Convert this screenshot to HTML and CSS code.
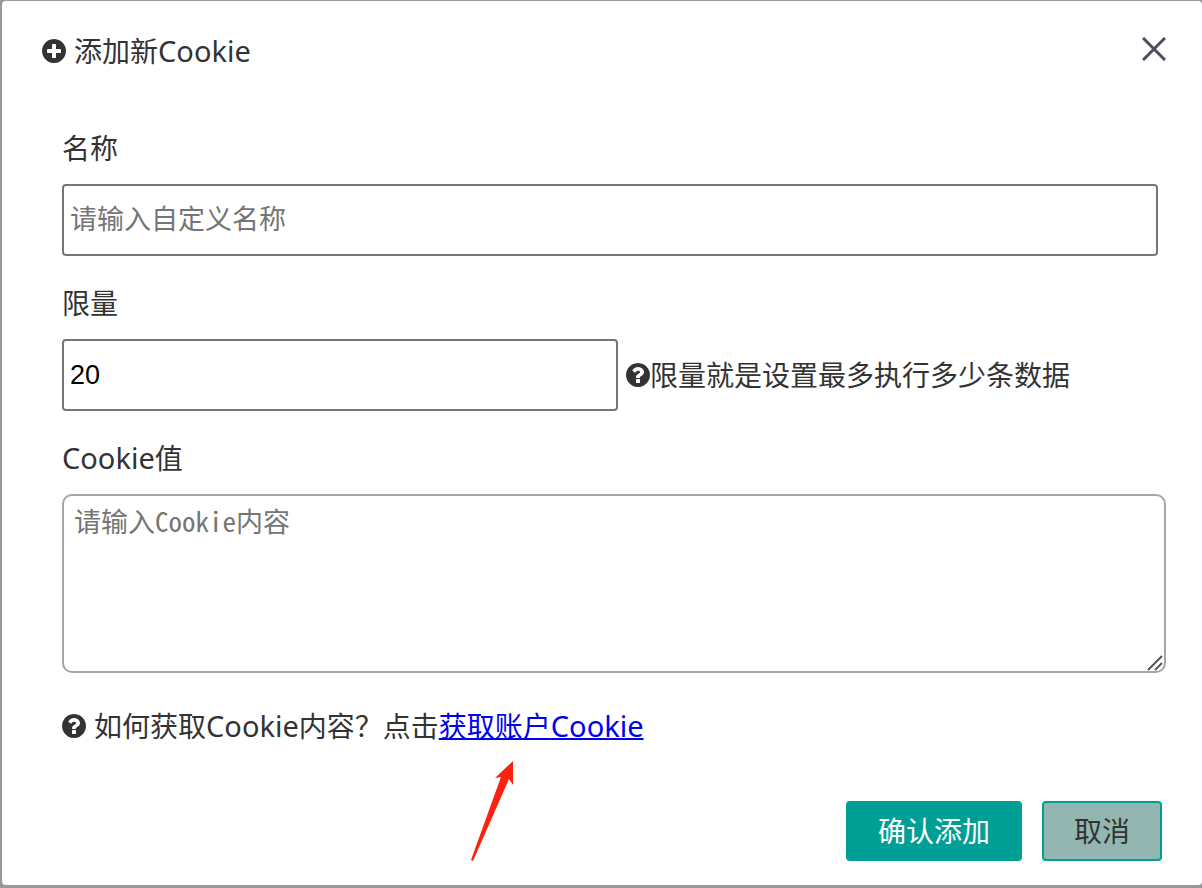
FILE: index.html
```html
<!DOCTYPE html>
<html lang="zh-CN">
<head>
<meta charset="utf-8">
<meta name="viewport" content="width=device-width, initial-scale=1">
<title>添加新Cookie</title>
<link rel="stylesheet" href="styles.css">
</head>
<body>
<main class="dialog" role="dialog" aria-labelledby="dialog-title">
  <header class="dialog-header">
    <h1 class="dialog-title" id="dialog-title">
      <svg class="icon" viewBox="128 128 1536 1536" aria-hidden="true"><path d="M1344 960v-128q0-26-19-45t-45-19h-256v-256q0-26-19-45t-45-19h-128q-26 0-45 19t-19 45v256h-256q-26 0-45 19t-19 45v128q0 26 19 45t45 19h256v256q0 26 19 45t45 19h128q26 0 45-19t19-45v-256h256q26 0 45-19t19-45zm320-64q0 209-103 385.5t-279.5 279.5-385.5 103-385.5-103-279.5-279.5-103-385.5 103-385.5 279.5-279.5 385.5-103 385.5 103 279.5 279.5 103 385.5z"/></svg>
      <span>添加新<span class="latin">Cookie</span></span>
    </h1>
    <button class="close" type="button" aria-label="关闭">
      <svg class="close-icon" viewBox="0 0 24 24" aria-hidden="true"><path d="M1 1 23 23M23 1 1 23"/></svg>
    </button>
  </header>

  <form class="dialog-form">
    <div class="field">
      <label class="label" for="name">名称</label>
      <input class="input input-name" id="name" type="text" placeholder="请输入自定义名称">
    </div>
    <div class="field">
      <label class="label" for="limit">限量</label>
      <div class="input-row">
        <input class="input input-limit" id="limit" type="text" value="20">
        <span class="note">
          <svg class="icon" viewBox="128 128 1536 1536" aria-hidden="true"><path d="M1024 1376v-192q0-14-9-23t-23-9h-192q-14 0-23 9t-9 23v192q0 14 9 23t23 9h192q14 0 23-9t9-23zm256-672q0-88-55.5-163t-138.5-116-170-41q-243 0-371 213-15 24 8 42l132 100q7 6 19 6 16 0 25-12 53-68 86-92 34-24 86-24 48 0 85.5 26t37.5 59q0 38-20 61t-68 45q-63 28-115.5 86.5t-52.5 125.5v36q0 14 9 23t23 9h192q14 0 23-9t9-23q0-19 21.5-49.5t54.5-49.5q32-18 49-28.5t46-35 44.5-48 28-60.5 12.5-81zm384 192q0 209-103 385.5t-279.5 279.5-385.5 103-385.5-103-279.5-279.5-103-385.5 103-385.5 279.5-279.5 385.5-103 385.5 103 279.5 279.5 103 385.5z"/></svg>
          <span>限量就是设置最多执行多少条数据</span>
        </span>
      </div>
    </div>
    <div class="field">
      <label class="label" for="cookie"><span class="latin">Cookie</span>值</label>
      <div class="textarea-wrap">
        <textarea class="textarea" id="cookie" placeholder="请输入Cookie内容"></textarea>
        <svg class="grip" viewBox="0 0 16 16" aria-hidden="true"><path d="M1 15 15 1M8 15 15 8"/></svg>
      </div>
    </div>
    <p class="help">
      <svg class="icon" viewBox="128 128 1536 1536" aria-hidden="true"><path d="M1024 1376v-192q0-14-9-23t-23-9h-192q-14 0-23 9t-9 23v192q0 14 9 23t23 9h192q14 0 23-9t9-23zm256-672q0-88-55.5-163t-138.5-116-170-41q-243 0-371 213-15 24 8 42l132 100q7 6 19 6 16 0 25-12 53-68 86-92 34-24 86-24 48 0 85.5 26t37.5 59q0 38-20 61t-68 45q-63 28-115.5 86.5t-52.5 125.5v36q0 14 9 23t23 9h192q14 0 23-9t9-23q0-19 21.5-49.5t54.5-49.5q32-18 49-28.5t46-35 44.5-48 28-60.5 12.5-81zm384 192q0 209-103 385.5t-279.5 279.5-385.5 103-385.5-103-279.5-279.5-103-385.5 103-385.5 279.5-279.5 385.5-103 385.5 103 279.5 279.5 103 385.5z"/></svg>
      <span>如何获取<span class="latin">Cookie</span>内容？点击<span class="link-anchor"><a class="link" href="#">获取账户<span class="latin">Cookie</span></a><svg class="arrow" viewBox="0 0 44 102" aria-hidden="true"><path d="M42 0V24L38 18 2 100 0 99 30 16 24 17Z"/></svg></span></span>
    </p>
    <footer class="actions">
      <button class="button button-primary" type="submit">确认添加</button>
      <button class="button button-cancel" type="button">取消</button>
    </footer>
  </form>
</main>
</body>
</html>
```

FILE: styles.css
```css
* {
  box-sizing: border-box;
}

body {
  margin: 0;
  min-height: 100vh;
  padding: 1px 0 3px 2px;
  display: flex;
  flex-direction: column;
  background: #999;
  color: #333;
  font: 28px/40px "Noto Sans", "Noto Sans CJK SC", sans-serif;
}

.dialog {
  flex: 1;
  display: flex;
  flex-direction: column;
  background: #fff;
  border-radius: 4px;
}

.latin {
  font-size: 29px;
  line-height: 1;
}

.icon {
  flex: none;
  width: 24px;
  height: 24px;
  fill: currentColor;
}

.dialog-header {
  display: flex;
  justify-content: space-between;
  align-items: flex-start;
  padding: 30px 30px 0 40px;
}

.dialog-title {
  display: flex;
  align-items: center;
  gap: 8px;
  margin: 0;
  font-size: 28px;
  font-weight: 400;
}

.close {
  display: flex;
  padding: 6px;
  border: 0;
  background: none;
  cursor: pointer;
}

.close-icon {
  width: 24px;
  height: 24px;
  fill: none;
  stroke: #4c4c5c;
  stroke-width: 3;
}

.dialog-form {
  flex: 1;
  display: flex;
  flex-direction: column;
  padding: 57px 36px 24px 60px;
}

.field {
  display: flex;
  flex-direction: column;
  gap: 16px;
  margin-bottom: 27px;
}

.label {
  align-self: flex-start;
}

.input {
  height: 72px;
  padding: 0 6px;
  border: 2px solid #767676;
  border-radius: 4px;
  background: #fff;
  color: #000;
  font: 27px "Liberation Sans", "Noto Sans CJK SC", sans-serif;
}

.input::placeholder,
.textarea::placeholder {
  color: #757575;
  opacity: 1;
}

.input-name {
  margin-right: 8px;
}

.input-row {
  display: flex;
  align-items: center;
  gap: 8px;
}

.input-limit {
  width: 556px;
  min-width: 0;
}

.note {
  display: flex;
  align-items: center;
}

.textarea-wrap {
  position: relative;
  display: flex;
}

.textarea {
  flex: 1;
  height: 179px;
  padding: 8px 10px;
  border: 2px solid #a5a5a5;
  border-radius: 10px;
  resize: none;
  color: #000;
  font: 27px/34px "Noto Sans Mono CJK SC", "Noto Sans CJK SC", monospace;
}

.grip {
  position: absolute;
  right: 3px;
  bottom: 2px;
  width: 16px;
  height: 16px;
  fill: none;
  stroke: #555;
  stroke-width: 2;
  pointer-events: none;
}

.help {
  display: flex;
  align-items: center;
  gap: 8px;
  margin: 6px 0 0;
}

.link-anchor {
  position: relative;
}

.link {
  color: #00e;
  text-decoration-thickness: 2px;
}

.arrow {
  position: absolute;
  top: 54px;
  left: 32px;
  width: 44px;
  height: 102px;
  fill: #ff2010;
  pointer-events: none;
}

.actions {
  display: flex;
  justify-content: flex-end;
  gap: 20px;
  margin-top: auto;
  padding-right: 4px;
}

.button {
  height: 60px;
  padding: 0 30px;
  border: 2px solid #009f95;
  border-radius: 4px;
  font: inherit;
  cursor: pointer;
}

.button-primary {
  background: #009f95;
  color: #fff;
}

.button-cancel {
  background: #93b7b0;
  color: #333;
}
```
